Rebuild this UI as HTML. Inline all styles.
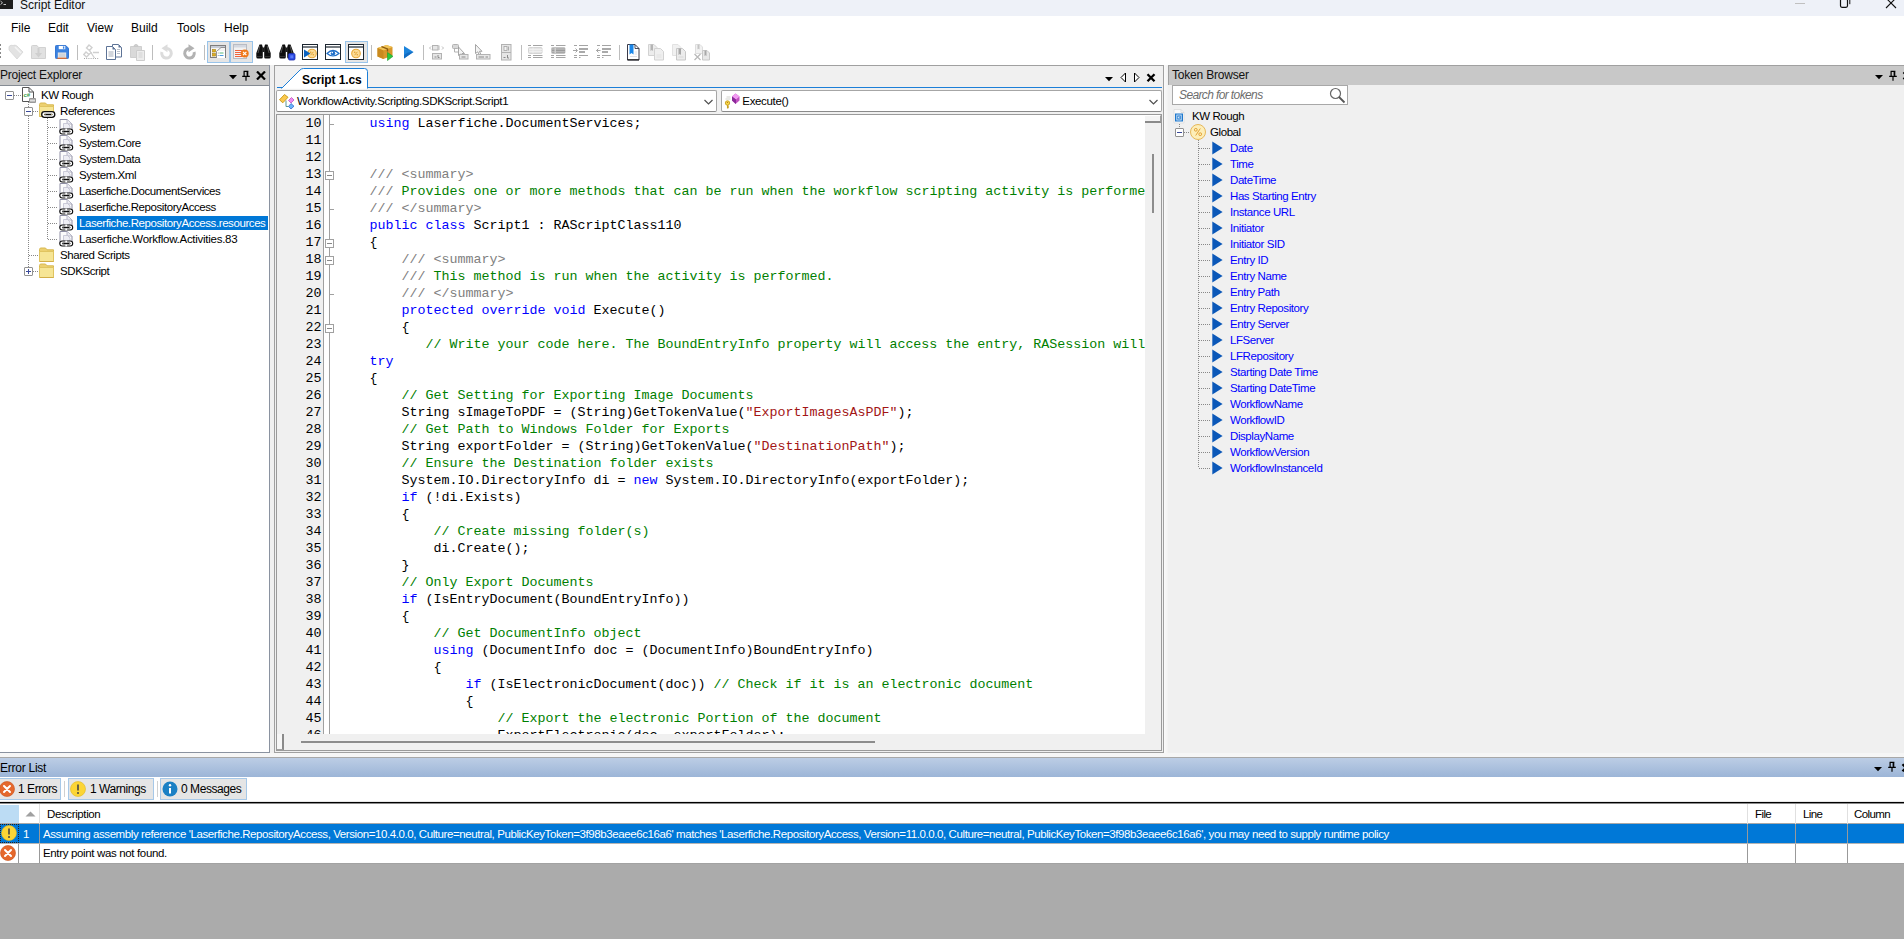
<!DOCTYPE html>
<html>
<head>
<meta charset="utf-8">
<title>Script Editor</title>
<style>
*{box-sizing:border-box;margin:0;padding:0}
html,body{width:1904px;height:939px;overflow:hidden;background:#f0f0f0;font-family:"Liberation Sans",sans-serif;font-size:11px;color:#000}
.abs{position:absolute}
div,span,svg{position:absolute}
#title{left:0;top:0;width:1904px;height:16px;background:#eef1f8}
#menu{left:0;top:16px;width:1904px;height:24px;background:#fff}
#menu span{top:5px;font-size:12px;white-space:nowrap;color:#000}
#tool{left:0;top:40px;width:1904px;height:25px;background:#fff}
.phead{background:#c8c8c8;height:21px;font-size:12px;white-space:nowrap;border-top:1px solid #a0a0a0;border-bottom:1px solid #868c94}
.phead .lbl{left:1px;top:2px;color:#111}
.tree{font-size:11px;white-space:nowrap}
.tr{height:16px;line-height:16px;white-space:nowrap;font-size:11.5px;letter-spacing:-0.42px}
.sel{background:#0078d7;color:#fff}
.tok{color:#0000ff}
#code{font-family:"Liberation Mono",monospace;font-size:13.33px;white-space:pre;overflow:hidden}
.ln{left:0;width:44.500px;text-align:right;height:17px;line-height:17px;color:#000}
.cl{left:60.500px;height:17px;line-height:17px;white-space:pre;color:#000}
.k{position:static;color:#0000ff}.c{position:static;color:#008000}.g{position:static;color:#808080}.s{position:static;color:#a31515}
.dotv{width:1px;background-image:linear-gradient(#888 50%,transparent 50%);background-size:1px 2px}
.doth{height:1px;background-image:linear-gradient(90deg,#888 50%,transparent 50%);background-size:2px 1px}
.pm{width:9px;height:9px;border:1px solid #919191;background:#fff;border-radius:1px}
.pm:before{content:"";position:absolute;left:1px;top:3px;width:5px;height:1px;background:#3a4a9a}
.pm.plus:after{content:"";position:absolute;left:3px;top:1px;width:1px;height:5px;background:#3a4a9a}
.eb{height:22px;background:#e5e5e5;border:1px solid #a6c8e8;font-size:12px;white-space:nowrap;letter-spacing:-0.450px}
.eb span{top:3px}
.ic{width:15px;height:15px;border-radius:50%}
</style>
</head>
<body>
<!-- TITLE BAR -->
<div id="title">
  <div style="left:0;top:0;width:13px;height:9px;background:#1e1e1e"></div><svg style="left:0;top:0" width="13" height="9"><path d="M0.500 1L2.500 2.800L0.500 4.600M3.500 4.500H6" fill="none" stroke="#ddd" stroke-width="0.900"/></svg>
  <div style="left:20px;top:-2px;font-size:12px;color:#111;white-space:nowrap">Script Editor</div>
  <div style="left:1795px;top:3px;width:10px;height:1px;background:#c0c0c0"></div>
  <svg style="left:1838px;top:0" width="14" height="10" viewBox="0 0 14 10"><rect x="2.500" y="-1" width="7" height="8.300" rx="1.500" fill="none" stroke="#111" stroke-width="1.200"/><path d="M11.800 -1V4.200" fill="none" stroke="#111" stroke-width="1"/></svg>
  <svg style="left:1885px;top:0" width="14" height="10" viewBox="0 0 14 10"><path d="M1 -2L11 8M11 -2L1 8" fill="none" stroke="#111" stroke-width="1.100"/></svg>
</div>
<!-- MENU -->
<div id="menu">
  <span style="left:11px">File</span><span style="left:48px">Edit</span><span style="left:87px">View</span><span style="left:131px">Build</span><span style="left:177px">Tools</span><span style="left:224px">Help</span>
</div>
<!-- TOOLBAR -->
<div id="tool">
<!--TOOLICONS-->
<div style="left:0;top:4px;width:1px;height:15px;background-image:linear-gradient(#888 50%,transparent 50%);background-size:1px 4px"></div>
<svg style="left:8px;top:4px" width="16" height="16" viewBox="0 0 16 16"><path d="M1 2.500Q3 0.500 5 1.500Q7 0.500 9 2L15 8L9 15L1 6Z" fill="#e3e3e3" stroke="#d6d6d6" stroke-width="0.800"/><path d="M7 3L13 9" stroke="#f4f4f4" stroke-width="1.500"/></svg>
<svg style="left:31px;top:4px" width="16" height="16" viewBox="0 0 16 16"><path d="M0.500 2.500Q0.500 1.500 1.500 1.500H6L7.500 3.500H14.500V14.500H0.500Z" fill="#e1e1e1" stroke="#d2d2d2"/><path d="M6.500 4V9H4L7.500 13.500L11 9H8.500V4Z" fill="#cfcfcf"/></svg>
<svg style="left:55px;top:5px" width="14" height="14" viewBox="0 0 15 15"><path d="M0.500 1.500Q0.500 0.500 1.500 0.500H11.500L14.500 3.500V13.500Q14.500 14.500 13.500 14.500H1.500Q0.500 14.500 0.500 13.500Z" fill="#3b82e0" stroke="#2a6fd0"/><rect x="4" y="1" width="7" height="3.500" fill="#fff"/><rect x="8.500" y="1.500" width="1.500" height="2.500" fill="#3b82e0"/><rect x="3" y="8" width="9" height="6" fill="#e6e6e6"/><rect x="4" y="9" width="7" height="4.500" fill="#d0d4da"/><rect x="2.500" y="13.600" width="10" height="1.200" fill="#f06a1a"/></svg>
<div style="left:77px;top:5px;width:1px;height:15px;background:#bdbdbd"></div>
<svg style="left:83px;top:4px" width="17" height="17" viewBox="0 0 17 17"><path d="M6 1L9 3.500L6.500 6.500L3.500 4Z" fill="#fff" stroke="#d0d0d0" stroke-width="1.400"/><path d="M3 8L6 10.500L3.500 13L0.800 10.500Z" fill="#fff" stroke="#d0d0d0" stroke-width="1.400"/><path d="M6.500 6.500L11.500 14M6 10L9 8.500M10 8.500H16" stroke="#cfcfcf" stroke-width="1.300" fill="none"/><path d="M1 14.500H16" stroke="#a8a8a8" stroke-width="1" stroke-dasharray="1 1.200"/></svg>
<svg style="left:106px;top:4px" width="17" height="17" viewBox="0 0 17 17"><path d="M6.500 0.500H12.500L15.500 3.500V13H6.500Z" fill="#fff" stroke="#5d7396"/><path d="M12.500 0.500V3.500H15.500Z" fill="#5d7396"/><path d="M11 5.500H14M11 7.500H14M11 9.500H14" stroke="#a9b0bc" stroke-width="0.800"/><path d="M0.500 2.500H6.500L9.500 5.500V15.500H0.500Z" fill="#fff" stroke="#5d7396"/><path d="M6.500 2.500V5.500H9.500Z" fill="#5d7396"/><path d="M2.500 8H7.500M2.500 10H7.500M2.500 12H7.500" stroke="#9aa2b0" stroke-width="0.900"/></svg>
<svg style="left:130px;top:4px" width="16" height="17" viewBox="0 0 16 17"><path d="M0.500 2.500H11.500V13.500H0.500Z" fill="#d9d9d9" stroke="#cfcfcf"/><path d="M4 2.500Q4 0.500 6 0.500Q8 0.500 8 2.500Z" fill="#d0d0d0" stroke="#c8c8c8"/><path d="M6.500 6.500H14.500V16.500H6.500Z" fill="#ececec" stroke="#cdcdcd"/><path d="M8.500 9H12.500M8.500 11H12.500M8.500 13H12.500" stroke="#d0d0d0" stroke-width="0.900"/></svg>
<div style="left:152px;top:5px;width:1px;height:15px;background:#bdbdbd"></div>
<svg style="left:159px;top:4px" width="15" height="17" viewBox="0 0 15 17"><path d="M7.500 4.500A4.800 4.800 0 1 1 2.900 8" fill="none" stroke="#dcdcdc" stroke-width="3"/><path d="M8.500 0.300V8.300L2.500 4.300Z" fill="#dcdcdc"/></svg>
<svg style="left:182px;top:4px" width="15" height="17" viewBox="0 0 15 17"><path d="M7.500 4.500A4.800 4.800 0 1 0 12.100 8" fill="none" stroke="#b2b2b2" stroke-width="3"/><path d="M6.500 0.300V8.300L12.500 4.300Z" fill="#b2b2b2"/></svg>
<div style="left:204px;top:5px;width:1px;height:15px;background:#bdbdbd"></div>
<div style="left:207px;top:1px;width:23px;height:22px;background:#e5e5e5;border:1px solid #99c4ea"></div>
<svg style="left:210px;top:5px" width="16" height="14" viewBox="0 0 16 14"><rect x="0.500" y="0.500" width="15" height="12" fill="#f4f4f4" stroke="#7d7d7d"/><rect x="1" y="1" width="14" height="2" fill="#c8ccd4"/><path d="M6.500 13V6.500L11 2.500H15" fill="none" stroke="#8a8a8a" stroke-width="0.900"/><rect x="7" y="6" width="8" height="7" fill="#fff"/><rect x="2.500" y="4.500" width="3" height="2.500" fill="#e0b020" stroke="#a88010" stroke-width="0.600"/><rect x="2.500" y="8.500" width="3" height="2.500" fill="#e0b020" stroke="#a88010" stroke-width="0.600"/><path d="M9.500 8H13.500" stroke="#58b878" stroke-width="1"/><path d="M9.500 10.500H13.500" stroke="#4a9ae0" stroke-width="1"/><path d="M7.800 8H8.600M7.800 10.500H8.600" stroke="#888" stroke-width="1"/></svg>
<div style="left:230px;top:1px;width:23px;height:22px;background:#e5e5e5;border:1px solid #99c4ea"></div>
<svg style="left:233px;top:4px" width="16" height="16" viewBox="0 0 16 16"><rect x="0.500" y="0.500" width="13" height="14" fill="#f2f2f2" stroke="#b8bcc4"/><rect x="1" y="1" width="12" height="2.500" fill="#d4d8e0"/><path d="M2 6.500H9M2 8.500H9M2 10.500H9M2 12.500H9" stroke="#f0643c" stroke-width="1"/><circle cx="11.700" cy="9.500" r="4" fill="#f07818"/><path d="M10 7.800L13.400 11.200M13.400 7.800L10 11.200" stroke="#fff" stroke-width="1.200"/></svg>
<svg style="left:256px;top:4px" width="16" height="16" viewBox="0 0 16 16"><path d="M3.500 0.500H6L6.800 3.500V13Q6.800 14.500 5.500 14.500H1.800Q0.300 14.500 0.300 13V9Z" fill="#0e0e0e"/><path d="M11.500 0.500H9L8.200 3.500V13Q8.200 14.500 9.500 14.500H13.200Q14.700 14.500 14.700 13V9Z" fill="#0e0e0e"/><rect x="6.300" y="3.500" width="2.400" height="4.500" fill="#1a1a1a"/><path d="M3.800 2L2 9M11.200 2L13 9" stroke="#5a5a5a" stroke-width="0.900"/><path d="M1 12.500H6M9 12.500H14" stroke="#3a3a3a" stroke-width="0.800"/></svg>
<svg style="left:279px;top:4px" width="17" height="17" viewBox="0 0 17 17"><path d="M3.500 0.500H6L6.800 3.500V13Q6.800 14.500 5.500 14.500H1.800Q0.300 14.500 0.300 13V9Z" fill="#0e0e0e"/><path d="M11.500 0.500H9L8.200 3.500V13Q8.200 14.500 9.500 14.500H13.200Q14.700 14.500 14.700 13V9Z" fill="#0e0e0e"/><rect x="6.300" y="3.500" width="2.400" height="4.500" fill="#1a1a1a"/><path d="M3.800 2L2 9M11.200 2L13 9" stroke="#5a5a5a" stroke-width="0.900"/><path d="M1 12.500H6M9 12.500H14" stroke="#3a3a3a" stroke-width="0.800"/><rect x="9.500" y="9.500" width="6.500" height="6.500" rx="1.200" fill="#2a4ae0" stroke="#1a2ab0" stroke-width="0.800"/><rect x="11.300" y="11.300" width="3" height="3" fill="#5a7af8"/></svg>
<svg style="left:302px;top:4px" width="16" height="16" viewBox="0 0 16 16"><rect x="0.500" y="0.500" width="15" height="15" fill="#fff" stroke="#1c2630" stroke-width="1"/><path d="M0.500 3H15.500" stroke="#1c2630" stroke-width="1.200"/><circle cx="10" cy="9.500" r="4.300" fill="#fbdc98" stroke="#e8a838" stroke-width="1.100"/><path d="M8.6 11.200L11.4 7.800" stroke="#e0a030" stroke-width="0.900"/><circle cx="8.7" cy="8.300" r="0.800" fill="#e0a030"/><circle cx="11.3" cy="10.800" r="0.800" fill="#e0a030"/><path d="M2 5.500L8.500 9.500L2 13.500Z" fill="#0a62c0"/></svg>
<svg style="left:325px;top:4px" width="16" height="16" viewBox="0 0 16 16"><rect x="0.500" y="0.500" width="15" height="15" fill="#fff" stroke="#1c2630" stroke-width="1"/><path d="M0.500 3H15.500" stroke="#1c2630" stroke-width="1.200"/><path d="M2 9.500Q8 3.500 14 9.500Q8 14.500 2 9.500Z" fill="#fff" stroke="#1e6ec8" stroke-width="1.200"/><circle cx="8" cy="9.300" r="2.200" fill="#1e6ec8"/><circle cx="7.300" cy="8.600" r="0.800" fill="#fff"/></svg>
<div style="left:345px;top:1px;width:23px;height:22px;background:#e5e5e5;border:1px solid #99c4ea"></div>
<svg style="left:348px;top:4px" width="16" height="16" viewBox="0 0 16 16"><rect x="0.500" y="0.500" width="15" height="15" fill="#fff" stroke="#1c2630" stroke-width="1"/><path d="M0.500 3H15.500" stroke="#1c2630" stroke-width="1.200"/><circle cx="8" cy="9.500" r="4.300" fill="#fbdc98" stroke="#e8a838" stroke-width="1.100"/><path d="M6.6 11.200L9.4 7.800" stroke="#e0a030" stroke-width="0.900"/><circle cx="6.7" cy="8.300" r="0.800" fill="#e0a030"/><circle cx="9.3" cy="10.800" r="0.800" fill="#e0a030"/></svg>
<div style="left:371px;top:5px;width:1px;height:15px;background:#bdbdbd"></div>
<svg style="left:377px;top:4px" width="17" height="17" viewBox="0 0 17 17"><path d="M0.500 4L9.500 1L15.500 3V11.500L6.500 15L0.500 12.500Z" fill="#d8982a"/><path d="M0.500 4L9.500 1L15.500 3L6.500 6.500Z" fill="#f2c558"/><path d="M0.500 4L6.500 6.500V15L0.500 12.500Z" fill="#c98a1e"/><path d="M4.500 2.700L10.500 4.900V7.500" fill="none" stroke="#8a5a10" stroke-width="1.300"/><path d="M10.500 8.500L16 12.300L10.500 16.500Z" fill="#2cc83c" stroke="#1a9a2a" stroke-width="0.600"/></svg>
<svg style="left:404px;top:6px" width="10" height="13" viewBox="0 0 10 13"><path d="M0 0L9.500 6L0 12.500Z" fill="#1c84dc"/><path d="M0 12.500L9.500 6L4 6.500L0 9Z" fill="#0d62b8" opacity="0.700"/></svg>
<div style="left:423px;top:5px;width:1px;height:15px;background:#bdbdbd"></div>
<svg style="left:429px;top:5px" width="16" height="15" viewBox="0 0 16 15"><rect x="3.500" y="0.500" width="5.500" height="4.500" fill="#e6e6e6" stroke="#b2b2b2"/><path d="M2 1.500L0.500 3L2 4.500M13 1.500L14.500 3L13 4.500M10 0.500V5" fill="none" stroke="#b2b2b2" stroke-width="0.900"/><rect x="3.500" y="8.500" width="9" height="5.500" fill="#e6e6e6" stroke="#b2b2b2"/><path d="M5.500 12H7.500M9 10V12.500H10.500" stroke="#8a8a8a" stroke-width="1" fill="none"/></svg>
<svg style="left:452px;top:4px" width="17" height="16" viewBox="0 0 17 16"><rect x="0.500" y="0.500" width="6" height="4" rx="1" fill="#d8d8d8" stroke="#b2b2b2"/><path d="M2.500 5V8H6" fill="none" stroke="#b2b2b2"/><path d="M6.500 3V11.500L8.500 10L10 13L11.500 12.300L10 9.500H12.500Z" fill="#f4f4f4" stroke="#9c9c9c" stroke-width="0.900"/><rect x="7.500" y="10.500" width="8.500" height="4.500" fill="#e6e6e6" stroke="#b2b2b2"/><path d="M9.500 13H13.500" stroke="#8a8a8a"/></svg>
<svg style="left:475px;top:4px" width="16" height="16" viewBox="0 0 16 16"><path d="M0.500 0.500V9.500L2.800 7.800L4.500 11.500L6 10.800L4.500 7.300H7Z" fill="#f4f4f4" stroke="#9c9c9c" stroke-width="0.900"/><rect x="1.500" y="10.500" width="13.500" height="4.500" fill="#e6e6e6" stroke="#b2b2b2"/><path d="M3.500 13H9M10.500 13H13" stroke="#8a8a8a"/></svg>
<svg style="left:501px;top:4px" width="11" height="17" viewBox="0 0 11 17"><rect x="0.500" y="0.500" width="9.500" height="15.500" fill="#e6e6e6" stroke="#b2b2b2"/><path d="M0.500 8.500H10" stroke="#b2b2b2"/><rect x="3" y="2.500" width="3" height="4" fill="#f4f4f4" stroke="#a4a4a4" stroke-width="0.800"/><path d="M7.500 2.500V6.500" stroke="#a4a4a4" stroke-width="0.900"/><path d="M2.500 13.500H4.500M6.500 11V14H8" stroke="#8a8a8a" stroke-width="1" fill="none"/></svg>
<div style="left:521px;top:5px;width:1px;height:15px;background:#bdbdbd"></div>
<svg style="left:528px;top:4px" width="15" height="16" viewBox="0 0 15 16"><path d="M0 1.500H3M5 1.500H14.500M0 11.500H3M5 11.500H14.500M0 13.500H3M5 13.500H14.500" stroke="#9a9a9a" stroke-width="0.900"/><rect x="0.500" y="3.500" width="13.500" height="6" rx="1" fill="#e4e4e4" stroke="#d4d4d4"/><path d="M1 5.500H14M1 7.500H14M5 3.500V9.500" stroke="#f4f4f4" stroke-width="0.700"/></svg>
<svg style="left:551px;top:4px" width="15" height="16" viewBox="0 0 15 16"><path d="M0 1.500H3M5 1.500H14.500M0 11.500H3M5 11.500H14.500M0 13.500H3M5 13.500H14.500" stroke="#9a9a9a" stroke-width="0.900"/><rect x="0.500" y="3.500" width="13.500" height="6" rx="1" fill="#cfcfcf" stroke="#c4c4c4"/><path d="M1 5H3.500M5 5H14M1 6.600H3.500M5 6.600H14M1 8.200H3.500M5 8.200H14" stroke="#8e8e8e" stroke-width="0.900"/></svg>
<svg style="left:573px;top:4px" width="16" height="16" viewBox="0 0 16 16"><path d="M1 1.500H4M6 1.500H15M1 11.500H4M6 11.500H15M1 13.500H4M6 13.500H7.500" stroke="#9a9a9a" stroke-width="0.900"/><path d="M6 5H15M6 8H12" stroke="#8e8e8e" stroke-width="1.500"/><path d="M0 6.500H4M2.500 4.500L4.500 6.500L2.500 8.500" fill="none" stroke="#9a9a9a" stroke-width="0.900"/></svg>
<svg style="left:596px;top:4px" width="16" height="16" viewBox="0 0 16 16"><path d="M1 1.500H4M6 1.500H15M1 11.500H4M6 11.500H15M1 13.500H4M6 13.500H7.500" stroke="#9a9a9a" stroke-width="0.900"/><path d="M6 5H15M6 8H12" stroke="#8e8e8e" stroke-width="1.500"/><path d="M0.500 6.500H4.500M2.500 4.500L0.500 6.500L2.500 8.500" fill="none" stroke="#9a9a9a" stroke-width="0.900"/></svg>
<div style="left:619px;top:5px;width:1px;height:15px;background:#bdbdbd"></div>
<svg style="left:627px;top:4px" width="13" height="17" viewBox="0 0 13 17"><path d="M0.500 0.500H8L12 4.500V16H0.500Z" fill="#fff" stroke="#3a3a48" stroke-width="1"/><path d="M8 0.500V4.500H12" fill="none" stroke="#3a3a48" stroke-width="0.900"/><path d="M0.500 15.800H12" stroke="#222" stroke-width="1.200"/><path d="M2.500 0.500H6.500V10.500L4.500 9L2.500 10.500Z" fill="#1a86e8"/><path d="M7.500 8H10M7.500 10H10M3 12.500H10" stroke="#d8d8e0" stroke-width="0.800"/></svg>
<svg style="left:648px;top:4px" width="17" height="17" viewBox="0 0 17 17"><path d="M0.500 0.500H6L9 3.500V11.500H0.500Z" fill="#ececec" stroke="#d2d2d2"/><path d="M2.500 0.500H5V7L3.800 6L2.500 7Z" fill="#b4b4b4"/><path d="M6.500 4.500H12.500L15.500 7.500V16H6.500Z" fill="#efefef" stroke="#d2d2d2"/><path d="M8.500 11H13.500M8.500 13H13.500" stroke="#dedede" stroke-width="0.800"/></svg>
<svg style="left:672px;top:4px" width="16" height="17" viewBox="0 0 16 17"><path d="M0.500 0.500H6L9 3.500V11.500H0.500Z" fill="#f1f1f1" stroke="#e2e2e2"/><path d="M4.500 4.500H10.500L13.500 7.500V16H4.500Z" fill="#ececec" stroke="#c8c8c8"/><path d="M6.500 4.500H9V11L7.800 10L6.500 11Z" fill="#a8a8a8"/><path d="M6.500 13H11.500" stroke="#d4d4d4" stroke-width="0.800"/></svg>
<svg style="left:694px;top:4px" width="17" height="17" viewBox="0 0 17 17"><path d="M1.500 0.500H6L8.500 3V9.500H1.500Z" fill="#f1f1f1" stroke="#dedede"/><path d="M3.500 0.500H5.500V5.500L4.500 4.800L3.500 5.500Z" fill="#c4c4c4"/><path d="M8.500 6.500H13L15.500 9V16H8.500Z" fill="#e8e8e8" stroke="#c8c8c8"/><path d="M10.500 6.500H12.500V12L11.500 11.200L10.500 12Z" fill="#a8a8a8"/><path d="M0.500 10L6.500 16M6.500 10L0.500 16" stroke="#b8b8b8" stroke-width="1.200"/></svg>
</div>
<!-- PROJECT EXPLORER -->
<svg width="0" height="0" style="left:0;top:0"><defs>
<g id="refdoc"><path d="M1 0.500H8L13 5V13H1Z" fill="#fcfcfc" stroke="#8e8ea4" stroke-width="1"/><path d="M8 0.500V5H13" fill="#ececf2" stroke="#a8a8bc" stroke-width="0.800"/><path d="M4.500 4.500H8.500L11 7V10H4.500Z" fill="#eeeef4" stroke="#c0c0d0" stroke-width="0.800"/><rect x="0.800" y="10" width="12.900" height="5" rx="2.500" fill="#fff" stroke="#0c0c0c" stroke-width="1.100"/><rect x="3" y="11.800" width="8.500" height="1.400" rx="0.700" fill="#0c0c0c"/><rect x="6.300" y="9.600" width="1.800" height="5.800" fill="#fff"/><rect x="3.500" y="11.800" width="7.500" height="1.400" fill="#0c0c0c"/><circle cx="4" cy="12.500" r="0.450" fill="#fff"/><circle cx="10.500" cy="12.500" r="0.450" fill="#fff"/></g>
<g id="folder"><path d="M0.500 2.500Q0.500 1 2 1H6.500L8 2.800H14.500V14.500H0.500Z" fill="#ecd070" stroke="#d8b850"/><path d="M0.500 4.500H14.500V14.500H0.500Z" fill="#f6e595" stroke="#e0c460"/><path d="M1 14.500H14.500" stroke="#d2ae48" stroke-width="1"/></g>
</defs></svg>
<div id="pe" style="left:0;top:65px;width:270px;height:688px;background:#fff;border-right:1px solid #8a92a0;border-bottom:1px solid #8a92a0">
  <div class="phead" style="left:0;top:0;width:269px"><span class="lbl" style="left:0;top:2px;letter-spacing:-0.200px">Project Explorer</span>
    <svg style="left:229px;top:9px" width="8" height="5"><path d="M0 0H8L4 4.300Z" fill="#000"/></svg>
    <svg style="left:241px;top:4px" width="10" height="11" viewBox="0 0 10 11"><path d="M2.600 1.300H7.400M3.100 1.300V5.800M6.700 1.300V5.800M1.200 6.300H8.800M5 6.300V10.800" fill="none" stroke="#000" stroke-width="1.200"/><path d="M6.200 1.300V5.800" stroke="#000" stroke-width="1.200"/></svg>
    <svg style="left:256px;top:5px" width="10" height="9" viewBox="0 0 10 9"><path d="M1 0.500L9 8.500M9 0.500L1 8.500" stroke="#000" stroke-width="2.2"/></svg>
  </div>
  <div class="tree" style="left:0;top:20px;width:269px;height:660px">
    <!-- coordinates relative to y=85 -->
    <div class="dotv" style="left:28px;top:17px;height:170px"></div>
    <div class="dotv" style="left:47px;top:33px;height:122px"></div>
    <div class="doth" style="left:14px;top:10px;width:8px"></div>
    <div class="pm" style="left:5px;top:6px"></div>
    <svg style="left:21px;top:2px" width="16" height="17" viewBox="0 0 16 17"><path d="M1.500 0.500H8L12.500 5V14.500H1.500Z" fill="#fff" stroke="#555"/><path d="M8 0.500V5H12.500" fill="none" stroke="#555"/><text x="2.500" y="9.500" font-size="6" font-family="Liberation Sans" fill="#3aa04a" font-weight="bold">c#</text><rect x="8" y="11" width="7" height="5" rx="1" fill="#999"/><rect x="9" y="12.500" width="5" height="2" fill="#ddd"/></svg>
    <div class="tr" style="left:41px;top:2px">KW Rough</div>
    <div class="doth" style="left:33px;top:26px;width:6px"></div>
    <div class="pm" style="left:24px;top:22px"></div>
    <svg style="left:39px;top:17px" width="17" height="18" viewBox="0 0 17 18"><use href="#folder"/><rect x="2.700" y="9.700" width="13.100" height="5.600" rx="2.800" fill="#fff" stroke="#0c0c0c" stroke-width="1.300"/><rect x="5" y="11.700" width="8.500" height="1.600" rx="0.800" fill="#0c0c0c"/><circle cx="6" cy="12.500" r="0.500" fill="#f6e595"/><circle cx="12.500" cy="12.500" r="0.500" fill="#f6e595"/></svg>
    <div class="tr" style="left:60px;top:18px">References</div>
    <div class="doth" style="left:48px;top:42px;width:10px"></div>
    <svg style="left:59px;top:34px" width="15" height="16" viewBox="0 0 15 16"><use href="#refdoc"/></svg>
    <div class="tr" style="left:79px;top:34px">System</div>
    <div class="doth" style="left:48px;top:58px;width:10px"></div>
    <svg style="left:59px;top:50px" width="15" height="16" viewBox="0 0 15 16"><use href="#refdoc"/></svg>
    <div class="tr" style="left:79px;top:50px">System.Core</div>
    <div class="doth" style="left:48px;top:74px;width:10px"></div>
    <svg style="left:59px;top:66px" width="15" height="16" viewBox="0 0 15 16"><use href="#refdoc"/></svg>
    <div class="tr" style="left:79px;top:66px">System.Data</div>
    <div class="doth" style="left:48px;top:90px;width:10px"></div>
    <svg style="left:59px;top:82px" width="15" height="16" viewBox="0 0 15 16"><use href="#refdoc"/></svg>
    <div class="tr" style="left:79px;top:82px">System.Xml</div>
    <div class="doth" style="left:48px;top:106px;width:10px"></div>
    <svg style="left:59px;top:98px" width="15" height="16" viewBox="0 0 15 16"><use href="#refdoc"/></svg>
    <div class="tr" style="left:79px;top:98px">Laserfiche.DocumentServices</div>
    <div class="doth" style="left:48px;top:122px;width:10px"></div>
    <svg style="left:59px;top:114px" width="15" height="16" viewBox="0 0 15 16"><use href="#refdoc"/></svg>
    <div class="tr" style="left:79px;top:114px">Laserfiche.RepositoryAccess</div>
    <div class="doth" style="left:48px;top:138px;width:10px"></div>
    <svg style="left:59px;top:130px" width="15" height="16" viewBox="0 0 15 16"><use href="#refdoc"/></svg>
    <div class="tr sel" style="left:77px;top:131px;width:191px;height:14px;line-height:14px;padding-left:2px">Laserfiche.RepositoryAccess.resources</div>
    <div class="doth" style="left:48px;top:154px;width:10px"></div>
    <svg style="left:59px;top:146px" width="15" height="16" viewBox="0 0 15 16"><use href="#refdoc"/></svg>
    <div class="tr" style="left:79px;top:146px;letter-spacing:-0.270px">Laserfiche.Workflow.Activities.83</div>
    <div class="doth" style="left:29px;top:170px;width:10px"></div>
    <svg style="left:39px;top:162px" width="16" height="16" viewBox="0 0 16 16"><use href="#folder"/></svg>
    <div class="tr" style="left:60px;top:162px">Shared Scripts</div>
    <div class="doth" style="left:33px;top:186px;width:6px"></div>
    <div class="pm plus" style="left:24px;top:182px"></div>
    <svg style="left:39px;top:178px" width="16" height="16" viewBox="0 0 16 16"><use href="#folder"/></svg>
    <div class="tr" style="left:60px;top:178px">SDKScript</div>
  </div>
</div>
<!-- EDITOR -->
<div id="ed" style="left:274px;top:65px;width:890px;height:688px;background:#f0f0f0;border:1px solid #a0a0a0">
<div id="edin" style="left:1px;top:0;width:887px;height:686px">
  <!-- tab strip (coords relative to 276,66) -->
  <div style="left:1px;top:21px;width:885px;height:1px;background:#1c7fd8"></div>
  <svg style="left:5px;top:2px" width="90" height="21" viewBox="0 0 90 21"><path d="M0.500 20.500L19 2Q20.500 0.500 22.500 0.500H83.500Q86.500 0.500 86.500 3.500V20.500" fill="#fff" stroke="#1c7fd8" stroke-width="1"/><path d="M1 21H86" stroke="#fff" stroke-width="1.200"/></svg>
  <div style="left:26px;top:7px;font-size:12px;font-weight:bold;white-space:nowrap;letter-spacing:-0.100px">Script 1.cs</div>
  <svg style="left:829px;top:11px" width="8" height="5"><path d="M0 0H8L4 4.300Z" fill="#000"/></svg>
  <svg style="left:844px;top:6px" width="7" height="11" viewBox="0 0 7 11"><path d="M5.500 1V10L1 5.500Z" fill="#fff" stroke="#000" stroke-width="1"/></svg>
  <svg style="left:857px;top:6px" width="7" height="11" viewBox="0 0 7 11"><path d="M1.500 1V10L6 5.500Z" fill="#fff" stroke="#000" stroke-width="1"/></svg>
  <svg style="left:870px;top:7px" width="10" height="9" viewBox="0 0 10 9"><path d="M1.500 1.200L8.500 8.200M8.500 1.200L1.500 8.200" stroke="#000" stroke-width="2.300"/></svg>
  <!-- combos -->
  <div style="left:0px;top:24px;width:441px;height:22px;background:#fff;border:1px solid #a6a6a6;border-bottom-color:#8a8a8a;border-radius:2px">
    <div style="left:20px;top:4px;font-size:11.500px;white-space:nowrap;letter-spacing:-0.330px">WorkflowActivity.Scripting.SDKScript.Script1</div>
    <svg style="left:2px;top:3px" width="16" height="16" viewBox="0 0 16 16"><path d="M5.500 0.500L9 3.300L3.800 8.800L0.500 5.800Z" fill="#fbc94e" stroke="#c8960e" stroke-width="0.900"/><path d="M7 6.500V12.500H9.500" fill="none" stroke="#4a8c8c" stroke-width="0.900"/><path d="M12.500 3.500L15 6L12 9L9.500 6.500Z" fill="#f08af0" stroke="#b848b8" stroke-width="0.700"/><path d="M12 9.500L15 12.200L12 15L9.500 12.500Z" fill="#6ab4f8" stroke="#2a5ac8" stroke-width="0.700"/></svg>
    <svg style="left:427px;top:8px" width="9" height="6" viewBox="0 0 9 6"><path d="M0.500 1L4.500 5L8.500 1" fill="none" stroke="#505050" stroke-width="1.200"/></svg>
  </div>
  <div style="left:445px;top:24px;width:441px;height:22px;background:#fff;border:1px solid #a6a6a6;border-bottom-color:#8a8a8a;border-radius:2px">
    <div style="left:20.300px;top:4px;font-size:11.500px;white-space:nowrap;letter-spacing:-0.330px">Execute()</div>
    <svg style="left:1px;top:2px" width="18" height="17" viewBox="0 0 18 17"><path d="M12.500 0.500L16.500 3.500V7.500L12.500 11L9 7.500V3.500Z" fill="#c050c0"/><path d="M12.500 0.500L16.500 3.500L13 6.500L9 3.500Z" fill="#f29af2"/><path d="M9 3.500L13 6.500V11L9 7.500Z" fill="#8a2a9a"/><circle cx="4.500" cy="10" r="2.200" fill="#f6d648" stroke="#c8a020" stroke-width="0.900"/><circle cx="4.500" cy="9.500" r="0.600" fill="#b06a20"/><path d="M4.500 12V15.500M4.500 13.500L6 13M4.500 15L5.800 14.500" fill="none" stroke="#c8a020" stroke-width="1.100"/><path d="M3.500 4H7.500M2.500 6H7.500" stroke="#c8c8c0" stroke-width="0.800"/></svg>
    <svg style="left:427px;top:8px" width="9" height="6" viewBox="0 0 9 6"><path d="M0.500 1L4.500 5L8.500 1" fill="none" stroke="#505050" stroke-width="1.200"/></svg>
  </div>
  <!-- code area: abs 277..1162 x, 114..751 y  -> relative left 1, top 48 -->
  <div id="code" style="left:0px;top:48px;width:886px;height:637px;background:#fff;border:1px solid #9a9a9a">
    <div style="left:0;top:0;width:46px;height:619px;background:#f0f0f0"></div>
    <div style="left:46px;top:0;width:1px;height:619px;background:#a0a0a0"></div>
    <div style="left:52px;top:0;width:1px;height:619px;background:#a0a0a0"></div>
    <div class="ln" style="top:0px">10</div><div class="cl" style="top:0px">    <span class="k">using</span> Laserfiche.DocumentServices;</div>
    <div class="ln" style="top:17px">11</div><div class="cl" style="top:17px"></div>
    <div class="ln" style="top:34px">12</div><div class="cl" style="top:34px"></div>
    <div class="ln" style="top:51px">13</div><div class="cl" style="top:51px">    <span class="g">/// &lt;summary&gt;</span></div>
    <div class="ln" style="top:68px">14</div><div class="cl" style="top:68px">    <span class="g">///</span><span class="c"> Provides one or more methods that can be run when the workflow scripting activity is performed.</span></div>
    <div class="ln" style="top:85px">15</div><div class="cl" style="top:85px">    <span class="g">/// &lt;/summary&gt;</span></div>
    <div class="ln" style="top:102px">16</div><div class="cl" style="top:102px">    <span class="k">public</span> <span class="k">class</span> Script1 : RAScriptClass110</div>
    <div class="ln" style="top:119px">17</div><div class="cl" style="top:119px">    {</div>
    <div class="ln" style="top:136px">18</div><div class="cl" style="top:136px">        <span class="g">/// &lt;summary&gt;</span></div>
    <div class="ln" style="top:153px">19</div><div class="cl" style="top:153px">        <span class="g">///</span><span class="c"> This method is run when the activity is performed.</span></div>
    <div class="ln" style="top:170px">20</div><div class="cl" style="top:170px">        <span class="g">/// &lt;/summary&gt;</span></div>
    <div class="ln" style="top:187px">21</div><div class="cl" style="top:187px">        <span class="k">protected</span> <span class="k">override</span> <span class="k">void</span> Execute()</div>
    <div class="ln" style="top:204px">22</div><div class="cl" style="top:204px">        {</div>
    <div class="ln" style="top:221px">23</div><div class="cl" style="top:221px">           <span class="c">// Write your code here. The BoundEntryInfo property will access the entry, RASession will get the Repository Access session</span></div>
    <div class="ln" style="top:238px">24</div><div class="cl" style="top:238px">    <span class="k">try</span></div>
    <div class="ln" style="top:255px">25</div><div class="cl" style="top:255px">    {</div>
    <div class="ln" style="top:272px">26</div><div class="cl" style="top:272px">        <span class="c">// Get Setting for Exporting Image Documents</span></div>
    <div class="ln" style="top:289px">27</div><div class="cl" style="top:289px">        String sImageToPDF = (String)GetTokenValue(<span class="s">"ExportImagesAsPDF"</span>);</div>
    <div class="ln" style="top:306px">28</div><div class="cl" style="top:306px">        <span class="c">// Get Path to Windows Folder for Exports</span></div>
    <div class="ln" style="top:323px">29</div><div class="cl" style="top:323px">        String exportFolder = (String)GetTokenValue(<span class="s">"DestinationPath"</span>);</div>
    <div class="ln" style="top:340px">30</div><div class="cl" style="top:340px">        <span class="c">// Ensure the Destination folder exists</span></div>
    <div class="ln" style="top:357px">31</div><div class="cl" style="top:357px">        System.IO.DirectoryInfo di = <span class="k">new</span> System.IO.DirectoryInfo(exportFolder);</div>
    <div class="ln" style="top:374px">32</div><div class="cl" style="top:374px">        <span class="k">if</span> (!di.Exists)</div>
    <div class="ln" style="top:391px">33</div><div class="cl" style="top:391px">        {</div>
    <div class="ln" style="top:408px">34</div><div class="cl" style="top:408px">            <span class="c">// Create missing folder(s)</span></div>
    <div class="ln" style="top:425px">35</div><div class="cl" style="top:425px">            di.Create();</div>
    <div class="ln" style="top:442px">36</div><div class="cl" style="top:442px">        }</div>
    <div class="ln" style="top:459px">37</div><div class="cl" style="top:459px">        <span class="c">// Only Export Documents</span></div>
    <div class="ln" style="top:476px">38</div><div class="cl" style="top:476px">        <span class="k">if</span> (IsEntryDocument(BoundEntryInfo))</div>
    <div class="ln" style="top:493px">39</div><div class="cl" style="top:493px">        {</div>
    <div class="ln" style="top:510px">40</div><div class="cl" style="top:510px">            <span class="c">// Get DocumentInfo object</span></div>
    <div class="ln" style="top:527px">41</div><div class="cl" style="top:527px">            <span class="k">using</span> (DocumentInfo doc = (DocumentInfo)BoundEntryInfo)</div>
    <div class="ln" style="top:544px">42</div><div class="cl" style="top:544px">            {</div>
    <div class="ln" style="top:561px">43</div><div class="cl" style="top:561px">                <span class="k">if</span> (IsElectronicDocument(doc)) <span class="c">// Check if it is an electronic document</span></div>
    <div class="ln" style="top:578px">44</div><div class="cl" style="top:578px">                {</div>
    <div class="ln" style="top:595px">45</div><div class="cl" style="top:595px">                    <span class="c">// Export the electronic Portion of the document</span></div>
    <div class="ln" style="top:612px">46</div><div class="cl" style="top:612px">                    ExportElectronic(doc, exportFolder);</div>
    <div style="left:48px;top:56px;width:9px;height:9px;background:#fff;border:1px solid #a0a0a0"><div style="left:1px;top:3px;width:5px;height:1px;background:#888"></div></div>
    <div style="left:48px;top:124px;width:9px;height:9px;background:#fff;border:1px solid #a0a0a0"><div style="left:1px;top:3px;width:5px;height:1px;background:#888"></div></div>
    <div style="left:48px;top:141px;width:9px;height:9px;background:#fff;border:1px solid #a0a0a0"><div style="left:1px;top:3px;width:5px;height:1px;background:#888"></div></div>
    <div style="left:48px;top:209px;width:9px;height:9px;background:#fff;border:1px solid #a0a0a0"><div style="left:1px;top:3px;width:5px;height:1px;background:#888"></div></div>
    <div style="left:53px;top:9px;width:4px;height:1px;background:#a0a0a0"></div>
    <div style="left:53px;top:94px;width:4px;height:1px;background:#a0a0a0"></div>
    <div style="left:53px;top:179px;width:4px;height:1px;background:#a0a0a0"></div>
    <!-- vertical scrollbar abs 1145..1161 -->
    <div style="left:868px;top:0;width:16px;height:619px;background:#f0f0f0"></div>
    <div style="left:868px;top:0;width:16px;height:8px;background:#f4f4f4;border-bottom:2px solid #8a8a8a;border-right:1px solid #a0a0a0;border-top:1px solid #fff"></div>
    <div style="left:875px;top:39px;width:2px;height:59px;background:#8c8c8c"></div>
    <!-- horizontal scrollbar abs y 734..750 -->
    <div style="left:0;top:619px;width:884px;height:16px;background:#f0f0f0"></div>
    <div style="left:0;top:619px;width:7px;height:16px;background:#f6f6f6;border-right:2px solid #8a8a8a;border-bottom:1px solid #a0a0a0"></div>
    <div style="left:24px;top:626px;width:574px;height:2px;background:#8c8c8c"></div>
  </div>
</div>
</div>
<!-- TOKEN BROWSER -->
<div style="left:1164px;top:65px;width:4px;height:688px;background:linear-gradient(90deg,#fafafa,#f2f2f2)"></div>
<div style="left:0;top:753px;width:1904px;height:4px;background:#f6f6f6"></div>
<div style="left:0;top:757px;width:1904px;height:1px;background:#a8a8a8"></div>
<div id="tb" style="left:1168px;top:65px;width:736px;height:688px;background:#f0f0f0">
  <div class="phead" style="left:0;top:0;width:736px;height:20px;border-bottom:none;border-left:1px solid #a0a0a0"><span class="lbl" style="left:3px;top:2px;letter-spacing:-0.200px">Token Browser</span>
    <svg style="left:706px;top:9px" width="8" height="5"><path d="M0 0H8L4 4.300Z" fill="#000"/></svg>
    <svg style="left:719px;top:4px" width="10" height="11" viewBox="0 0 10 11"><path d="M2.600 1.300H7.400M3.100 1.300V5.800M6.700 1.300V5.800M1.200 6.300H8.800M5 6.300V10.800" fill="none" stroke="#000" stroke-width="1.200"/><path d="M6.200 1.300V5.800" stroke="#000" stroke-width="1.200"/></svg>
    <svg style="left:732.500px;top:5px" width="10" height="9" viewBox="0 0 10 9"><path d="M1.500 1.200L8.500 8.200M8.500 1.200L1.500 8.200" stroke="#000" stroke-width="2.300"/></svg>
  </div>
  <div style="left:4px;top:20px;width:176px;height:20px;background:#fff;border:1px solid #a8a8a8">
    <div style="left:6px;top:2px;font-size:12px;font-style:italic;color:#6d6d6d;white-space:nowrap;letter-spacing:-0.620px">Search for tokens</div>
    <svg style="left:156px;top:1px" width="17" height="17" viewBox="0 0 17 17"><circle cx="6.500" cy="6.500" r="5" fill="none" stroke="#666" stroke-width="1.200"/><path d="M10 10L15.500 15.500" stroke="#555" stroke-width="1.800"/></svg>
  </div>
  <!-- tree: coords relative to panel (1168,65) -->
  <svg style="left:5px;top:44px" width="13" height="15" viewBox="0 0 13 15"><path d="M1 0.500H8L11 3.500V14H1Z" fill="#fbfbfb" stroke="#dcdcdc" stroke-width="0.800"/><path d="M8 0.500V3.500H11" fill="none" stroke="#d0d0d0" stroke-width="0.700"/><rect x="2" y="4.500" width="8" height="8" fill="#1f78cc"/><rect x="3.800" y="6" width="4.400" height="5" fill="none" stroke="#d8eafc" stroke-width="0.900"/><path d="M6 7V10M4.800 8.500H6" stroke="#d8eafc" stroke-width="0.900"/></svg>
  <div class="tr" style="left:24px;top:43px">KW Rough</div>
  <div class="dotv" style="left:11px;top:59px;height:4px"></div>
  <div class="pm" style="left:7px;top:63px"></div>
  <div class="doth" style="left:16px;top:67px;width:6px"></div>
  <div style="left:22px;top:59px;width:16px;height:16px;border-radius:50%;background:#fdeeb8;border:1px solid #e6b85a"></div>
  <svg style="left:22px;top:59px" width="16" height="16" viewBox="0 0 16 16"><circle cx="5.800" cy="5.800" r="1.400" fill="none" stroke="#e09a28" stroke-width="0.900"/><circle cx="10.200" cy="10.200" r="1.400" fill="none" stroke="#e09a28" stroke-width="0.900"/><path d="M10.300 4.500L5.700 11.500" stroke="#e09a28" stroke-width="0.900"/></svg>
  <div class="tr" style="left:42px;top:59px">Global</div>
  <div class="dotv" style="left:30px;top:75px;height:328px"></div>
  <div class="doth" style="left:31px;top:83px;width:12px"></div><svg style="left:44px;top:76px" width="12" height="14" viewBox="0 0 12 14"><path d="M0.300 0.500L10.600 7L0.300 13.500Z" fill="#0a57b8"/></svg><div class="tr tok" style="left:62px;top:75px">Date</div>
  <div class="doth" style="left:31px;top:99px;width:12px"></div><svg style="left:44px;top:92px" width="12" height="14" viewBox="0 0 12 14"><path d="M0.300 0.500L10.600 7L0.300 13.500Z" fill="#0a57b8"/></svg><div class="tr tok" style="left:62px;top:91px">Time</div>
  <div class="doth" style="left:31px;top:115px;width:12px"></div><svg style="left:44px;top:108px" width="12" height="14" viewBox="0 0 12 14"><path d="M0.300 0.500L10.600 7L0.300 13.500Z" fill="#0a57b8"/></svg><div class="tr tok" style="left:62px;top:107px">DateTime</div>
  <div class="doth" style="left:31px;top:131px;width:12px"></div><svg style="left:44px;top:124px" width="12" height="14" viewBox="0 0 12 14"><path d="M0.300 0.500L10.600 7L0.300 13.500Z" fill="#0a57b8"/></svg><div class="tr tok" style="left:62px;top:123px">Has Starting Entry</div>
  <div class="doth" style="left:31px;top:147px;width:12px"></div><svg style="left:44px;top:140px" width="12" height="14" viewBox="0 0 12 14"><path d="M0.300 0.500L10.600 7L0.300 13.500Z" fill="#0a57b8"/></svg><div class="tr tok" style="left:62px;top:139px">Instance URL</div>
  <div class="doth" style="left:31px;top:163px;width:12px"></div><svg style="left:44px;top:156px" width="12" height="14" viewBox="0 0 12 14"><path d="M0.300 0.500L10.600 7L0.300 13.500Z" fill="#0a57b8"/></svg><div class="tr tok" style="left:62px;top:155px">Initiator</div>
  <div class="doth" style="left:31px;top:179px;width:12px"></div><svg style="left:44px;top:172px" width="12" height="14" viewBox="0 0 12 14"><path d="M0.300 0.500L10.600 7L0.300 13.500Z" fill="#0a57b8"/></svg><div class="tr tok" style="left:62px;top:171px">Initiator SID</div>
  <div class="doth" style="left:31px;top:195px;width:12px"></div><svg style="left:44px;top:188px" width="12" height="14" viewBox="0 0 12 14"><path d="M0.300 0.500L10.600 7L0.300 13.500Z" fill="#0a57b8"/></svg><div class="tr tok" style="left:62px;top:187px">Entry ID</div>
  <div class="doth" style="left:31px;top:211px;width:12px"></div><svg style="left:44px;top:204px" width="12" height="14" viewBox="0 0 12 14"><path d="M0.300 0.500L10.600 7L0.300 13.500Z" fill="#0a57b8"/></svg><div class="tr tok" style="left:62px;top:203px">Entry Name</div>
  <div class="doth" style="left:31px;top:227px;width:12px"></div><svg style="left:44px;top:220px" width="12" height="14" viewBox="0 0 12 14"><path d="M0.300 0.500L10.600 7L0.300 13.500Z" fill="#0a57b8"/></svg><div class="tr tok" style="left:62px;top:219px">Entry Path</div>
  <div class="doth" style="left:31px;top:243px;width:12px"></div><svg style="left:44px;top:236px" width="12" height="14" viewBox="0 0 12 14"><path d="M0.300 0.500L10.600 7L0.300 13.500Z" fill="#0a57b8"/></svg><div class="tr tok" style="left:62px;top:235px">Entry Repository</div>
  <div class="doth" style="left:31px;top:259px;width:12px"></div><svg style="left:44px;top:252px" width="12" height="14" viewBox="0 0 12 14"><path d="M0.300 0.500L10.600 7L0.300 13.500Z" fill="#0a57b8"/></svg><div class="tr tok" style="left:62px;top:251px">Entry Server</div>
  <div class="doth" style="left:31px;top:275px;width:12px"></div><svg style="left:44px;top:268px" width="12" height="14" viewBox="0 0 12 14"><path d="M0.300 0.500L10.600 7L0.300 13.500Z" fill="#0a57b8"/></svg><div class="tr tok" style="left:62px;top:267px">LFServer</div>
  <div class="doth" style="left:31px;top:291px;width:12px"></div><svg style="left:44px;top:284px" width="12" height="14" viewBox="0 0 12 14"><path d="M0.300 0.500L10.600 7L0.300 13.500Z" fill="#0a57b8"/></svg><div class="tr tok" style="left:62px;top:283px">LFRepository</div>
  <div class="doth" style="left:31px;top:307px;width:12px"></div><svg style="left:44px;top:300px" width="12" height="14" viewBox="0 0 12 14"><path d="M0.300 0.500L10.600 7L0.300 13.500Z" fill="#0a57b8"/></svg><div class="tr tok" style="left:62px;top:299px">Starting Date Time</div>
  <div class="doth" style="left:31px;top:323px;width:12px"></div><svg style="left:44px;top:316px" width="12" height="14" viewBox="0 0 12 14"><path d="M0.300 0.500L10.600 7L0.300 13.500Z" fill="#0a57b8"/></svg><div class="tr tok" style="left:62px;top:315px">Starting DateTime</div>
  <div class="doth" style="left:31px;top:339px;width:12px"></div><svg style="left:44px;top:332px" width="12" height="14" viewBox="0 0 12 14"><path d="M0.300 0.500L10.600 7L0.300 13.500Z" fill="#0a57b8"/></svg><div class="tr tok" style="left:62px;top:331px">WorkflowName</div>
  <div class="doth" style="left:31px;top:355px;width:12px"></div><svg style="left:44px;top:348px" width="12" height="14" viewBox="0 0 12 14"><path d="M0.300 0.500L10.600 7L0.300 13.500Z" fill="#0a57b8"/></svg><div class="tr tok" style="left:62px;top:347px">WorkflowID</div>
  <div class="doth" style="left:31px;top:371px;width:12px"></div><svg style="left:44px;top:364px" width="12" height="14" viewBox="0 0 12 14"><path d="M0.300 0.500L10.600 7L0.300 13.500Z" fill="#0a57b8"/></svg><div class="tr tok" style="left:62px;top:363px">DisplayName</div>
  <div class="doth" style="left:31px;top:387px;width:12px"></div><svg style="left:44px;top:380px" width="12" height="14" viewBox="0 0 12 14"><path d="M0.300 0.500L10.600 7L0.300 13.500Z" fill="#0a57b8"/></svg><div class="tr tok" style="left:62px;top:379px">WorkflowVersion</div>
  <div class="doth" style="left:31px;top:403px;width:12px"></div><svg style="left:44px;top:396px" width="12" height="14" viewBox="0 0 12 14"><path d="M0.300 0.500L10.600 7L0.300 13.500Z" fill="#0a57b8"/></svg><div class="tr tok" style="left:62px;top:395px">WorkflowInstanceId</div>
</div>
<!-- ERROR LIST -->
<svg width="0" height="0" style="left:0;top:0"><defs>
<g id="ierr"><circle cx="8" cy="8" r="7.500" fill="#e5682c"/><circle cx="8" cy="8" r="7.500" fill="none" stroke="#c9511a" stroke-width="0.600"/><path d="M5 5L11 11M11 5L5 11" stroke="#fff" stroke-width="2" stroke-linecap="round"/></g>
<g id="iwarn"><circle cx="8" cy="8" r="7.500" fill="#fcd535"/><circle cx="8" cy="8" r="7.500" fill="none" stroke="#e0b820" stroke-width="0.600"/><path d="M8 3.500V9.500" stroke="#444" stroke-width="1.600"/><circle cx="8" cy="12" r="1" fill="#444"/></g>
<g id="iinfo"><circle cx="8" cy="8" r="7.500" fill="#1b80c4"/><path d="M8 7V12.500" stroke="#fff" stroke-width="2"/><circle cx="8" cy="4.300" r="1.200" fill="#fff"/></g>
</defs></svg>
<div id="el" style="left:0;top:758px;width:1904px;height:181px;background:#ababab">
  <div style="left:0;top:0;width:1904px;height:19px;background:linear-gradient(#bccde5,#9cb5d7);font-size:12px"><span style="left:0px;top:3px;white-space:nowrap;letter-spacing:-0.250px">Error List</span>
    <svg style="left:1874px;top:9px" width="8" height="5"><path d="M0 0H8L4 4.300Z" fill="#000"/></svg>
    <svg style="left:1887px;top:3px" width="10" height="11" viewBox="0 0 10 11"><path d="M2.600 1.300H7.400M3.100 1.300V5.800M6.700 1.300V5.800M1.200 6.300H8.800M5 6.300V10.800" fill="none" stroke="#000" stroke-width="1.200"/><path d="M6.200 1.300V5.800" stroke="#000" stroke-width="1.200"/></svg>
    <svg style="left:1900.500px;top:5px" width="10" height="9" viewBox="0 0 10 9"><path d="M1.500 1.200L8.500 8.200M8.500 1.200L1.500 8.200" stroke="#000" stroke-width="2.300"/></svg>
  </div>
  <div style="left:0;top:19px;width:1904px;height:25px;background:#fff"></div>
  <div class="eb" style="left:-2px;top:20px;width:63px"><svg style="left:0px;top:2px" width="16" height="16"><use href="#ierr"/></svg><span style="left:19px">1 Errors</span></div>
  <div style="left:64px;top:23px;width:1px;height:16px;background:#d0d0d0"></div>
  <div class="eb" style="left:68px;top:20px;width:86px"><svg style="left:1px;top:2px" width="16" height="16"><use href="#iwarn"/></svg><span style="left:21px">1 Warnings</span></div>
  <div style="left:157px;top:23px;width:1px;height:16px;background:#d0d0d0"></div>
  <div class="eb" style="left:160px;top:20px;width:87px"><svg style="left:1px;top:2px" width="16" height="16"><use href="#iinfo"/></svg><span style="left:20px">0 Messages</span></div>
  <div style="left:0;top:43px;width:1904px;height:1px;background:#e8e8e8"></div><div style="left:0;top:44px;width:1904px;height:1px;background:#000"></div><div style="left:0;top:45px;width:1904px;height:1px;background:#8a8a8a"></div>
  <!-- header row -->
  <div style="left:0;top:46px;width:1904px;height:20px;background:#fff;border-bottom:1px solid #a8a8a8"></div>
  <div style="left:0;top:47px;width:19px;height:18px;background:#bcdcf4"></div>
  <svg style="left:25px;top:53px" width="11" height="6"><path d="M0.500 5.500L5.500 0.500L10.500 5.500Z" fill="#a0a0a0"/></svg>
  <div style="left:39px;top:46px;width:1px;height:20px;background:#e0e0e0"></div>
  <div class="tr" style="left:47px;top:48px;letter-spacing:-0.380px">Description</div>
  <div class="tr" style="left:1755px;top:48px;letter-spacing:-0.600px">File</div>
  <div class="tr" style="left:1803px;top:48px;letter-spacing:-0.600px">Line</div>
  <div class="tr" style="left:1854px;top:48px;letter-spacing:-0.600px">Column</div>
  <!-- row 1 -->
  <div style="left:0;top:66px;width:1904px;height:19px;background:#0078d7"></div>
  <div class="tr" style="left:23px;top:68px;color:#fff">1</div>
  <div class="tr" id="r1t" style="left:43px;top:68px;color:#fff;letter-spacing:-0.412px">Assuming assembly reference 'Laserfiche.RepositoryAccess, Version=10.4.0.0, Culture=neutral, PublicKeyToken=3f98b3eaee6c16a6' matches 'Laserfiche.RepositoryAccess, Version=11.0.0.0, Culture=neutral, PublicKeyToken=3f98b3eaee6c16a6', you may need to supply runtime policy</div>
  <div style="left:0;top:85px;width:1904px;height:1px;background:#b4b4b4;z-index:2"></div><div style="left:0;top:105px;width:1904px;height:1px;background:#a2a2a2"></div>
  <!-- row 2 -->
  <div style="left:0;top:85px;width:1904px;height:20px;background:#fff"></div>
  <div class="tr" style="left:43px;top:87px;letter-spacing:-0.350px">Entry point was not found.</div>
  <div style="left:1747px;top:46px;width:1px;height:20px;background:#e0e0e0"></div><div style="left:1795px;top:46px;width:1px;height:20px;background:#e0e0e0"></div><div style="left:1847px;top:46px;width:1px;height:20px;background:#e0e0e0"></div>
  <div style="left:1747px;top:66px;width:1px;height:39px;background:#999"></div><div style="left:1795px;top:66px;width:1px;height:39px;background:#999"></div><div style="left:1847px;top:66px;width:1px;height:39px;background:#999"></div>
  <div style="left:18px;top:85px;width:1px;height:20px;background:#999"></div><div style="left:39px;top:66px;width:1px;height:39px;background:#999"></div>
  <div style="left:0;top:66px;width:19px;height:19px;border:1px dotted #222;background:#0078d7"></div>
  <svg style="left:1px;top:67px" width="16" height="16"><use href="#iwarn"/></svg>
  <svg style="left:0px;top:87px" width="16" height="16"><use href="#ierr"/></svg>
</div>
</body>
</html>
